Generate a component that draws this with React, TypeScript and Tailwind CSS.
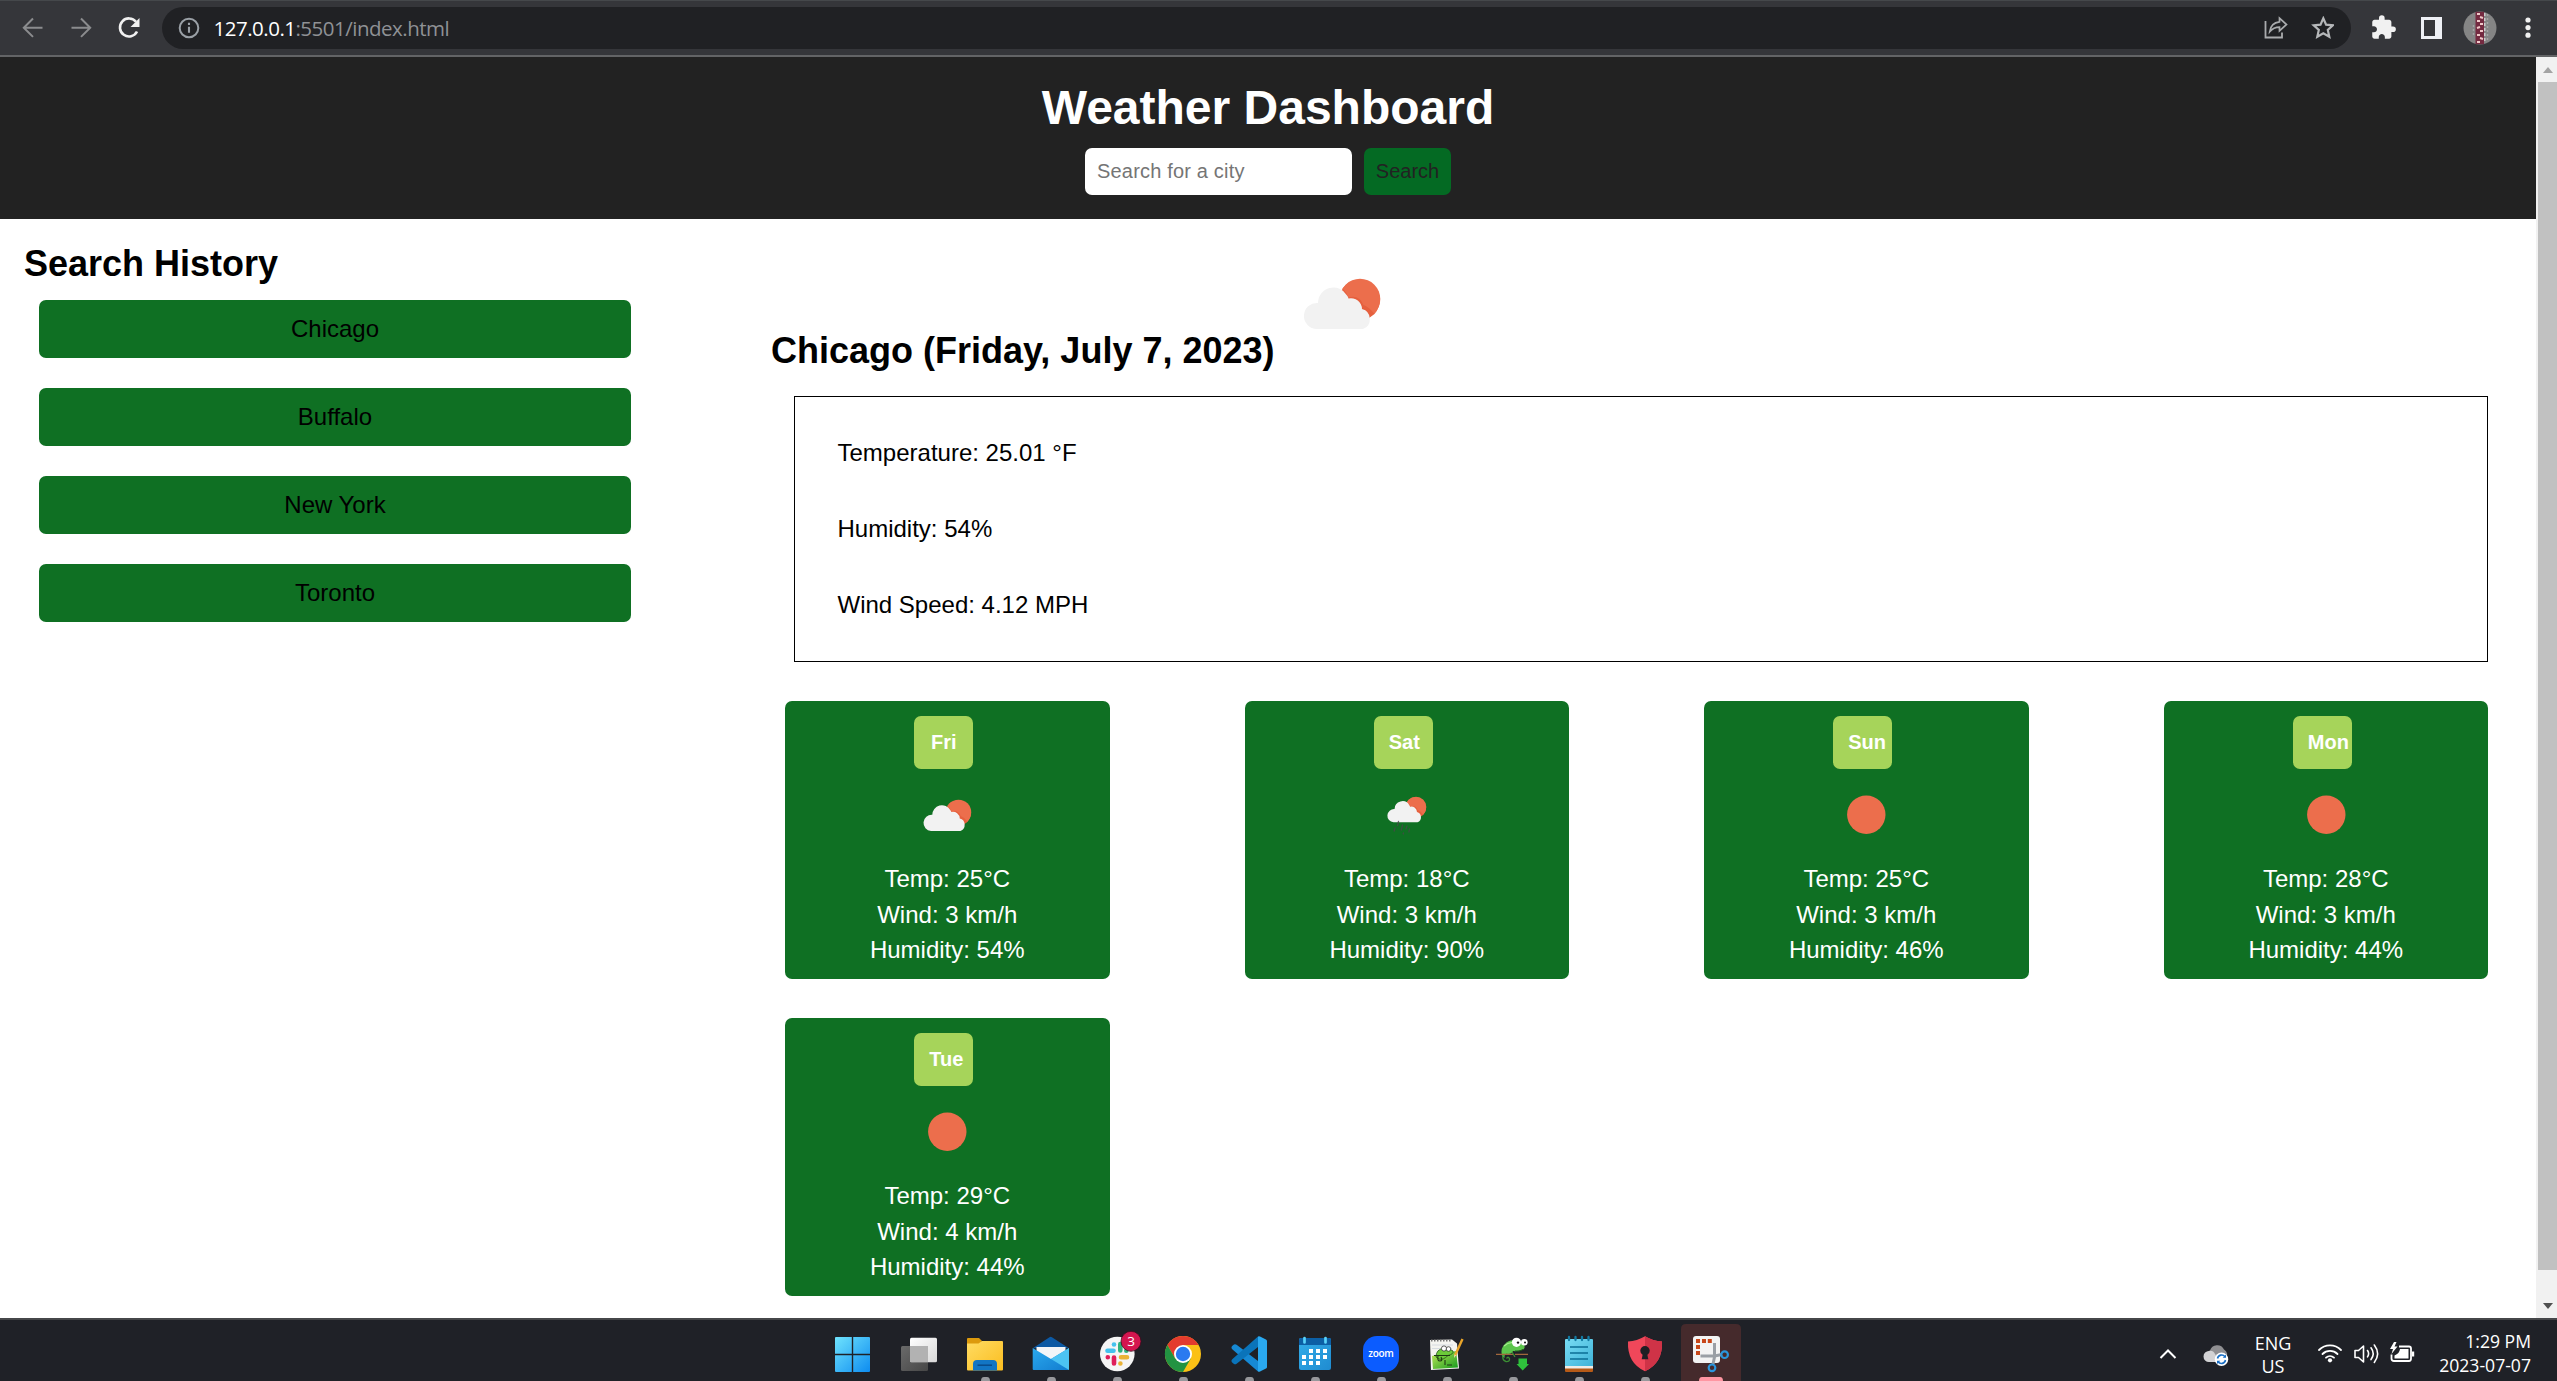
import React from "react";
import type { ReactNode } from "react";

const cities = ["Chicago", "Buffalo", "New York", "Toronto"];

type Sky = "cloud" | "rain" | "sun";
type Day = { day: string; sky: Sky; temp: number; wind: number; humidity: number };

const forecast: Day[] = [
  { day: "Fri", sky: "cloud", temp: 25, wind: 3, humidity: 54 },
  { day: "Sat", sky: "rain", temp: 18, wind: 3, humidity: 90 },
  { day: "Sun", sky: "sun", temp: 25, wind: 3, humidity: 46 },
  { day: "Mon", sky: "sun", temp: 28, wind: 3, humidity: 44 },
  { day: "Tue", sky: "sun", temp: 29, wind: 4, humidity: 44 },
];

/* Sun behind a cloud, on a 78 x 52 canvas */
function CloudShape() {
  return (
    <g>
      <path d="M39.500 10.500A20.500 20.500 0 1 1 71.500 36L55 31z" fill="#ec6e4c" />
      <circle cx="57" cy="21" r="20.300" fill="#ec6e4c" />
      <path
        d="M39.500 10.500Q43.500 14 45.500 19.500Q56 16.500 60.500 27Q66 29 71.500 36L66 40L44 26z"
        fill="#e6603e"
      />
      <path
        d="M13 51 A13 13 0 0 1 15 25 A15.5 15.5 0 0 1 44 17.500 Q45 18.500 45.500 20.500 A11 11 0 0 1 59 31 A10.500 10.500 0 0 1 60 51 Z"
        fill="#f2f2f2"
      />
    </g>
  );
}

function SkyIcon({ sky }: { sky: Sky }) {
  return (
    <svg width="76" height="76" viewBox="0 0 76 76" className="block">
      {sky === "sun" && <circle cx="38.300" cy="37.700" r="19.200" fill="#ec6e4c" />}
      {sky === "cloud" && (
        <g transform="translate(13.900 22.200) scale(.625)">
          <CloudShape />
        </g>
      )}
      {sky === "rain" && (
        <g>
          <g transform="translate(17.900 19.300) scale(.51)">
            <CloudShape />
          </g>
          <g stroke="#48484a" strokeWidth="1.300" strokeLinecap="round" opacity=".8">
            <path d="M29.500 44.500l-1 4M26 51l-.8 3M33.500 48l-1.200 5M38 49l-1 3M34.500 56l-.3 1M40.500 52l-.6 3" />
          </g>
        </g>
      )}
    </svg>
  );
}

function BrowserBar() {
  return (
    <div className="flex h-[57px] shrink-0 items-center border-t border-b-2 border-t-[#45484b] border-b-[#636466] bg-[#35363a] pr-[26px] pb-px">
      <svg width="162" height="54" viewBox="0 1 162 54" className="shrink-0" fill="none">
        <g stroke="#8b8c8e" strokeWidth="2">
          <path d="M42.500 27.700H24.500M33 18.500L23.800 27.700L33 36.900" />
          <path d="M71.500 27.700H89.500M81 18.500L90.200 27.700L81 36.900" />
        </g>
        <path d="M136 21.800A9 9 0 1 0 137 31.500" stroke="#f1f1f1" strokeWidth="2.600" />
        <path d="M139.500 18v9h-9z" fill="#f1f1f1" />
      </svg>
      <div className="flex h-[42px] flex-1 items-center rounded-full bg-[#202124] pl-[16px] pr-[17px]">
        <svg width="22" height="22" viewBox="0 0 22 22" fill="none">
          <circle cx="11" cy="11" r="9.300" stroke="#9aa0a6" strokeWidth="2" />
          <path d="M11 9.800v6M11 5.800v2.300" stroke="#9aa0a6" strokeWidth="2.100" />
        </svg>
        <span className="ml-[13.5px] whitespace-nowrap font-['Open_Sans','Noto_Sans',sans-serif] text-[20.500px] leading-[42px] tracking-[-0.5px] text-[#8f9195]">
          <span className="text-white">127.0.0.1</span>:5501/index.html
        </span>
        <svg width="70" height="24" viewBox="0 0 70 24" className="ml-auto" fill="none">
          <path d="M1.500 5v16.500h16.500v-5" stroke="#a9abad" strokeWidth="1.800" />
          <path
            d="M15.500 2.200l7 6.300l-7 6.300v-3.600c-4 0-7 1.200-9.800 4.600c.6-5.300 3.500-9.300 9.800-10z"
            stroke="#a9abad"
            strokeWidth="1.700"
          />
          <path
            d="M59.300 2.300l2.800 6.300l6.800.7l-5.100 4.600l1.500 6.800l-6-3.500l-6 3.500l1.500-6.800l-5.100-4.600l6.800-.7z"
            stroke="#b5b7b9"
            strokeWidth="2.200"
          />
        </svg>
      </div>
      <div className="ml-[19px] flex items-center">
        <svg width="27" height="27" viewBox="0 0 24 24" fill="#f1f1f1">
          <path d="M20.500 11H19V7c0-1.100-.9-2-2-2h-4V3.500a2.500 2.500 0 0 0-5 0V5H4c-1.100 0-2 .9-2 2v3.800h1.500c1.500 0 2.700 1.200 2.700 2.700S5 16.200 3.500 16.200H2V20c0 1.100.9 2 2 2h3.800v-1.500c0-1.500 1.200-2.700 2.700-2.700s2.700 1.200 2.700 2.700V22H17c1.100 0 2-.9 2-2v-4h1.500a2.500 2.500 0 0 0 0-5z" />
        </svg>
        <svg width="21" height="22" viewBox="0 0 21 22" className="ml-[24px]">
          <path d="M0 0h21v22H0zM3 3v16h11V3z" fill="#eef0f5" fillRule="evenodd" />
        </svg>
        <svg width="34" height="34" viewBox="0 0 34 34" className="ml-[21px]">
          <circle cx="17" cy="17" r="16.500" fill="#858585" />
          <path d="M10.500 14v12M24.500 3v28" stroke="#a5a5a5" strokeWidth="1.500" strokeDasharray="2 2" />
          <rect x="12.500" y=".8" width="8.500" height="32.400" fill="#742a40" />
          <path
            d="M14 3h3M17 6l3 1M14 10h3M17 13h3M14 17l3-1M17 20h3M14 24h3M17 27l3 1M14 31h3"
            stroke="#f0c9c9"
            strokeWidth="2"
          />
          <path d="M21.800 2v30" stroke="#ddd" strokeWidth="1.200" strokeDasharray="3 2" />
        </svg>
        <svg width="6" height="22" viewBox="0 0 6 22" className="ml-[28px]" fill="#f1f1f1">
          <circle cx="3" cy="3" r="2.600" />
          <circle cx="3" cy="10.600" r="2.600" />
          <circle cx="3" cy="18.200" r="2.600" />
        </svg>
      </div>
    </div>
  );
}

function Header() {
  return (
    <header className="flex h-[162px] flex-col items-center bg-[#222222] pt-[23px]">
      <h1 className="text-[48px] leading-[55px] font-bold text-white">Weather Dashboard</h1>
      <div className="mt-[13px] flex gap-[12px]">
        <input
          className="h-[47px] w-[267px] rounded-[7px] bg-white px-[12px] text-[20px] tracking-[0.18px] placeholder:text-[#757575]"
          placeholder="Search for a city"
        />
        <button className="h-[47px] w-[87px] rounded-[7px] bg-[#046a23] pb-[2px] text-[20px] text-[#222222]">
          Search
        </button>
      </div>
    </header>
  );
}

function DayCard({ item }: { item: Day }) {
  return (
    <div className="flex h-[278px] flex-col items-center rounded-[7px] bg-[#0f7023] pt-[15px] text-white">
      <div className="mr-[7px] h-[53px] w-[59px] rounded-[7px] bg-[#a6d45a] px-[15px] text-center text-[20px] leading-[53px] font-bold">
        {item.day}
      </div>
      <div className="mt-[8px]">
        <SkyIcon sky={item.sky} />
      </div>
      <div className="mt-[8px] text-center text-[24px] leading-[35.500px]">
        <p>Temp: {item.temp}°C</p>
        <p>Wind: {item.wind} km/h</p>
        <p>Humidity: {item.humidity}%</p>
      </div>
    </div>
  );
}

function Dashboard() {
  return (
    <div className="flex-1 bg-white font-['Liberation_Sans',Arial,sans-serif] text-black">
      <Header />
      <div className="flex">
        <aside className="w-[770px] pt-[24px]">
          <h2 className="pl-[24px] text-[36px] leading-[41px] font-bold">Search History</h2>
          <div className="mt-[16px] ml-[39px] flex w-[592px] flex-col gap-[30px]">
            {cities.map((city) => (
              <button key={city} className="h-[58px] rounded-[7px] bg-[#0f7023] text-[24px]">
                {city}
              </button>
            ))}
          </div>
        </aside>
        <main className="flex-1 pr-[48px]">
          <div className="flex h-[177px] items-end pl-px">
            <h2 className="mb-[25px] text-[36px] leading-[41px] font-bold whitespace-nowrap">
              Chicago (Friday, July 7, 2023)
            </h2>
            <svg
              width="78"
              height="52"
              viewBox="0 0 78 52"
              className="mb-[66px] ml-[28px] shrink-0"
            >
              <CloudShape />
            </svg>
          </div>
          <div className="ml-[24px] h-[266px] border border-black pt-[18px] pl-[42.5px] text-[24px] leading-[76px]">
            <p>Temperature: 25.01 °F</p>
            <p>Humidity: 54%</p>
            <p>Wind Speed: 4.12 MPH</p>
          </div>
          <div className="mt-[39px] ml-[15px] grid grid-cols-4 gap-x-[135px] gap-y-[39px]">
            {forecast.map((item) => (
              <DayCard key={item.day} item={item} />
            ))}
          </div>
        </main>
      </div>
    </div>
  );
}

function Scrollbar() {
  return (
    <div className="flex w-[21px] flex-col bg-[#f1f1f1] pl-[2px]">
      <svg width="19" height="25" viewBox="0 0 19 25">
        <path d="M5 16l5-6l5 6z" fill="#a3a3a3" />
      </svg>
      <div className="flex-1 bg-[#c1c1c1]" />
      <svg width="19" height="48" viewBox="0 0 19 48">
        <path d="M5 33h10l-5 6z" fill="#505050" />
      </svg>
    </div>
  );
}

/* Taskbar icons share a 66 x 61 slot canvas */
const taskIcons: { name: string; state: "idle" | "open" | "active"; art: ReactNode }[] = [
  {
    name: "start",
    state: "idle",
    art: (
      <g fill="url(#win)">
        <path d="M17 17h15.800v16.800H16V18q0-1 1-1zM34.200 17H50q1 0 1 1v15.800H34.200zM16 35.200h16.800V52H17q-1 0-1-1zM34.200 35.200H51V51q0 1-1 1H34.200z" />
      </g>
    ),
  },
  {
    name: "task-view",
    state: "idle",
    art: (
      <g>
        <rect x="16" y="26" width="27" height="25" rx="1.500" fill="url(#tvd)" />
        <rect x="25" y="17.700" width="27" height="24.500" rx="1.500" fill="url(#tvl)" />
        <path d="M25 26h18v16H25z" fill="#b2b2b2" />
      </g>
    ),
  },
  {
    name: "explorer",
    state: "open",
    art: (
      <g>
        <path d="M16 19q0-1 1-1h11l3 3l-3 4H16z" fill="#dc9a0d" />
        <path d="M16 23.500h11.500l3.500-2.500h20q1 0 1 1v27.500q0 1-1 1H17q-1 0-1-1z" fill="url(#fold)" />
        <path d="M22 50.600V44q0-4 4-4h16q4 0 4 4v6.600z" fill="#1275c4" />
        <path d="M26.500 45.200h14.500" stroke="#0a4a8a" strokeWidth="1.500" />
      </g>
    ),
  },
  {
    name: "mail",
    state: "open",
    art: (
      <g>
        <path d="M15.700 28.300L32.500 17.200q1.200-.8 2.400 0L52 28.300z" fill="#0c59a4" />
        <path d="M19.500 27h29v12h-29z" fill="#f3f5f8" />
        <path d="M15.700 28L34 39L52 28V49q0 1-1 1H16.700q-1 0-1-1z" fill="url(#mail)" />
        <path d="M52 28L34 39L52 50z" fill="#4cc3f3" />
      </g>
    ),
  },
  {
    name: "slack",
    state: "open",
    art: (
      <g>
        <circle cx="34.300" cy="34" r="17.300" fill="#f5f5f5" />
        <g strokeWidth="4.600" strokeLinecap="round">
          <path d="M24.500 30.700h6" stroke="#44c2ee" />
          <path d="M31 24.500v.01" stroke="#44c2ee" />
          <path d="M37.300 24v6.500M43.300 30.700v.01" stroke="#31b27c" />
          <path d="M38 37.300h6M37.400 43.500v.01" stroke="#ebb336" />
          <path d="M31 37.500v6M24.800 37.300v.01" stroke="#df1e5a" />
        </g>
        <circle cx="48" cy="21.300" r="10" fill="#d4154f" stroke="#3d0c1d" strokeWidth=".8" />
        <text
          x="48"
          y="26"
          textAnchor="middle"
          fontSize="13.500"
          fill="#fff"
          fontFamily="Open Sans, Noto Sans, sans-serif"
        >
          3
        </text>
      </g>
    ),
  },
  {
    name: "chrome",
    state: "open",
    art: (
      <g>
        <circle cx="34" cy="34" r="18" fill="#fbc116" />
        <path d="M18.400 25A18 18 0 0 1 49.600 25H34L26.200 38.500z" fill="#e33b2e" />
        <path d="M18.400 25A18 18 0 0 0 34 52L41.800 38.500H34L26.200 38.500z" fill="#229342" />
        <circle cx="34" cy="34" r="9" fill="#fff" />
        <circle cx="34" cy="34" r="7.200" fill="#2a7af0" />
      </g>
    ),
  },
  {
    name: "vscode",
    state: "open",
    art: (
      <g>
        <path d="M43 51.500L17.500 29.500q-2.200-2.200.2-4l1.300-1q1.300-.8 2.600.3L43 41z" fill="#1689d4" />
        <path d="M43 16.500L17.500 39q-2.200 2.200.2 4l1.300 1q1.300.8 2.600-.3L43 27z" fill="#0a74ba" />
        <path d="M43 16.500q1-.7 2 0l6 3q1 .5 1 1.500v26q0 1-1 1.500l-6 3q-1 .6-2 0z" fill="#2aa9f0" />
      </g>
    ),
  },
  {
    name: "calendar",
    state: "open",
    art: (
      <g>
        <rect x="18" y="18" width="32" height="32" rx="2" fill="url(#cal)" />
        <path d="M18 25V20q0-2 2-2h28q2 0 2 2v5z" fill="#0c5fa5" />
        <path d="M23.500 18v4.500M44.500 18v4.500" stroke="#5ad3fa" strokeWidth="2.700" strokeLinecap="round" />
        <g fill="#fff">
          <path d="M28 29h4v4h-4zM35 29h4v4h-4zM42 29h4v4h-4zM21 35h4v4h-4zM28 35h4v4h-4zM35 35h4v4h-4zM42 35h4v4h-4zM21 41h4v4h-4zM28 41h4v4h-4zM35 41h4v4h-4z" />
        </g>
      </g>
    ),
  },
  {
    name: "zoom",
    state: "open",
    art: (
      <g>
        <rect x="16" y="16" width="36" height="36" rx="14" fill="#0b5cff" />
        <text
          x="34"
          y="37"
          textAnchor="middle"
          fontSize="10"
          fontWeight="600"
          textLength="25.500"
          fill="#fff"
          fontFamily="Open Sans, Lato, sans-serif"
        >
          zoom
        </text>
      </g>
    ),
  },
  {
    name: "notepad-plus",
    state: "open",
    art: (
      <g>
        <path d="M17 20l22-.5l5 4l2 25l-28 1.500z" fill="#f4f4f0" />
        <path d="M19 36l24-5l2 16.500l-25 1.500z" fill="url(#npp)" />
        <path d="M19 25h21M19 28.500h20" stroke="#cfd6dd" strokeWidth=".8" />
        <path d="M18 20.500h20" stroke="#777" strokeWidth="2" strokeDasharray="1.500 1.500" />
        <path d="M23 37q0-8 8-8.500q6-.5 9 2.500q1 3-5 4.500q-5 5-9 3.500z" fill="#6ccb3a" stroke="#1f5212" strokeWidth=".8" />
        <circle cx="31" cy="28.500" r="2.600" fill="#fff" stroke="#222" strokeWidth=".7" />
        <circle cx="35.500" cy="29" r="2.300" fill="#fff" stroke="#222" strokeWidth=".7" />
        <path d="M21 35.500h16M25 36q-1 5 2 5t1-4M32 40v5M34 45h5" stroke="#1e3812" strokeWidth="1.100" fill="none" />
        <path d="M42 35.500L49.500 19" stroke="#e9a52a" strokeWidth="2.400" />
        <path d="M41 38l.3-3.500l1.800.8z" fill="#f3dcb0" />
      </g>
    ),
  },
  {
    name: "chameleon",
    state: "open",
    art: (
      <g>
        <path
          d="M23 36Q21 28 26 24Q30 19.500 36 20.500L45 25Q47 28.500 43 30Q38 31.500 34 31Q33 34 29 34Q25 33 25.500 38Z"
          fill="#5cc54c"
        />
        <path d="M25 26q5-4.500 10-3" stroke="#a4ec8c" strokeWidth="1.300" fill="none" />
        <path d="M36 31q4 1 8-1.500" stroke="#1f5a1c" strokeWidth="1" fill="none" />
        <path d="M17 34.300h17M36 34.300h13" stroke="#a0673c" strokeWidth="1.300" />
        <path d="M24 35q-1 5.500 3 6.500q4 .3 3.500-3q-1.500-2.500-3 0M33 32l3 5" stroke="#3c8f34" strokeWidth="1.300" fill="none" />
        <circle cx="37.500" cy="22.300" r="4.600" fill="#fff" />
        <circle cx="45.300" cy="22.300" r="3.300" fill="#fff" />
        <circle cx="39" cy="22.600" r="1.200" fill="#111" />
        <circle cx="46" cy="22.600" r="1" fill="#111" />
        <path d="M39.500 38.500h8.500v5.500h2L43.700 50.500L37.500 44h2z" fill="#2fc13c" />
      </g>
    ),
  },
  {
    name: "notepad",
    state: "open",
    art: (
      <g>
        <path d="M20 46h28v5q0 1-1 1H21q-1 0-1-1z" fill="#b65a17" />
        <path d="M20 45h28v3.500H20z" fill="#f0ece6" />
        <path d="M20 20q0-1 1-1h26q1 0 1 1v26H20z" fill="url(#note)" />
        <path d="M24 17v3M30.500 17v3M37 17v3M43.500 17v3" stroke="#137ba3" strokeWidth="2.300" strokeLinecap="round" />
        <path d="M25 27h18M25 33h18M25 39h18" stroke="#0b6d95" strokeWidth="1.700" />
      </g>
    ),
  },
  {
    name: "shield",
    state: "open",
    art: (
      <g>
        <path d="M34 16.300Q42 21 51 21.500Q52 43 34 51.300Q16 43 17 21.500Q26 21 34 16.300z" fill="#f0475a" />
        <path d="M34 16.300Q42 21 51 21.500Q52 43 34 51.300z" fill="#cf3347" />
        <circle cx="34" cy="30.800" r="4.700" fill="#1f1f24" />
        <path d="M32 33h4l1.300 6.300h-6.600z" fill="#1f1f24" />
      </g>
    ),
  },
  {
    name: "snipping",
    state: "active",
    art: (
      <g>
        <rect x="16" y="16" width="27" height="27" rx="3" fill="#f3f3f3" />
        <g fill="#c8471a">
          <path d="M19 19h4v4h-4zM25 19h4v4h-4zM30.800 19h4v4h-4zM19 25h4v4h-4zM19 31h4v4h-4z" />
        </g>
        <path d="M37.500 23v14L36 44M23.500 36h14L45 34.500" stroke="#9a9fa5" strokeWidth="3" fill="none" />
        <circle cx="47.600" cy="34.700" r="3.300" fill="none" stroke="#2a96dd" strokeWidth="2.200" />
        <circle cx="35" cy="47.800" r="3.300" fill="none" stroke="#2a96dd" strokeWidth="2.200" />
      </g>
    ),
  },
];

function Gradient({ id, from, to }: { id: string; from: string; to: string }) {
  return (
    <linearGradient id={id} x1="0" y1="0" x2="1" y2="1">
      <stop offset="0" stopColor={from} />
      <stop offset="1" stopColor={to} />
    </linearGradient>
  );
}

function Taskbar() {
  return (
    <div className="flex h-[63px] shrink-0 border-t-2 border-[#46474a] bg-[#1f2127] pl-[819px] font-['Open_Sans','Noto_Sans',sans-serif] text-white">
      {taskIcons.map((icon) => (
        <svg key={icon.name} width="66" height="61" viewBox="0 0 66 61" className="shrink-0">
          <defs>
            <Gradient id="win" from="#6fe3fd" to="#0d8cf0" />
            <Gradient id="tvd" from="#6a6a6a" to="#474747" />
            <Gradient id="tvl" from="#ffffff" to="#d8d8d8" />
            <Gradient id="fold" from="#ffdc63" to="#fbbd1f" />
            <Gradient id="mail" from="#2aa9ee" to="#127ccf" />
            <Gradient id="cal" from="#33aeea" to="#1f8bd0" />
            <Gradient id="npp" from="#c6ea5a" to="#129a1c" />
            <Gradient id="note" from="#78dcf4" to="#3fb3d8" />
          </defs>
          {icon.state === "active" && (
            <path d="M4 61V9q0-5 5-5h50q5 0 5 5v52z" fill="#452a2c" />
          )}
          {icon.art}
          {icon.state === "open" && (
            <path d="M30 61q0-4 3-4h3q3 0 3 4z" fill="#97989c" />
          )}
          {icon.state === "active" && (
            <path d="M22 61q0-4 3-4h18q3 0 3 4z" fill="#ff96a2" />
          )}
        </svg>
      ))}
      <div className="ml-auto flex pr-[26px]">
        <svg width="80" height="61" viewBox="2154 1320 80 61" fill="none">
          <path d="M2160.500 1358l7.500-7.500l7.500 7.500" stroke="#fff" strokeWidth="2" />
          <path d="M2210 1362a6 6 0 0 1 0-11.500a7.500 7.500 0 0 1 14-1a6 6 0 0 1 2 9l-6 3.500z" fill="#8f8f92" />
          <path d="M2209 1362a5.500 5.500 0 0 1 0-11q4-1 6 3l5 8z" fill="#d2d2d4" />
          <circle cx="2221.500" cy="1359.300" r="6.700" fill="#fff" />
          <path
            d="M2217.500 1358.500a4.200 4.200 0 0 1 7.500-1.800M2225.500 1360a4.200 4.200 0 0 1-7.500 1.800"
            stroke="#1a6fc4"
            strokeWidth="1.600"
          />
          <path d="M2226 1354.500v3.300h-3.300zM2217 1364v-3.300h3.300z" fill="#1a6fc4" />
        </svg>
        <div className="ml-[19px] w-[40px] pt-[12px] text-center text-[18px] leading-[23px]">
          <p>ENG</p>
          <p>US</p>
        </div>
        <svg width="106" height="61" viewBox="2313 1320 106 61" className="ml-[20px]" fill="none">
          <g stroke="#fff" strokeWidth="1.800" strokeLinecap="round">
            <path d="M2319 1350a15.500 15.500 0 0 1 22 0M2322.500 1354a10.700 10.700 0 0 1 15 0M2326 1357.700a6 6 0 0 1 8 0" />
            <path d="M2367.500 1350.500q2.200 3.200 0 6.400M2371 1347.800q4.400 5.900 0 11.800M2374.300 1345q6.600 8.700 0 17.400" strokeWidth="1.600" />
            <path
              d="M2355 1350.500h3.500l5-4.500v16l-5-4.500h-3.500z"
              strokeLinejoin="round"
              strokeWidth="1.600"
            />
          </g>
          <circle cx="2330" cy="1360.300" r="2.100" fill="#fff" />
          <path
            d="M2399 1346.500h10q2 0 2 2v10q0 2.500-2 2.500h-15q-2.500 0-2.500-2.500v-4"
            stroke="#fff"
            strokeWidth="1.800"
          />
          <path d="M2400 1349h8.500v9.500h-14v-3q5-2 5.500-6.500z" fill="#fff" />
          <path d="M2412 1351.500h2.200v5h-2.200z" fill="#fff" />
          <path d="M2394 1342l-4 7h3l-1.500 5l6-7.500h-3l2-4.500z" fill="#fff" />
        </svg>
        <div className="ml-[14px] w-[98px] pt-[9px] text-right text-[17.600px] leading-[24px] whitespace-nowrap">
          <p>1:29 PM</p>
          <p>2023-07-07</p>
        </div>
      </div>
    </div>
  );
}

export default function App() {
  return (
    <div className="flex h-[1381px] w-[2557px] flex-col overflow-hidden">
      <BrowserBar />
      <div className="flex min-h-0 flex-1">
        <Dashboard />
        <Scrollbar />
      </div>
      <Taskbar />
    </div>
  );
}
